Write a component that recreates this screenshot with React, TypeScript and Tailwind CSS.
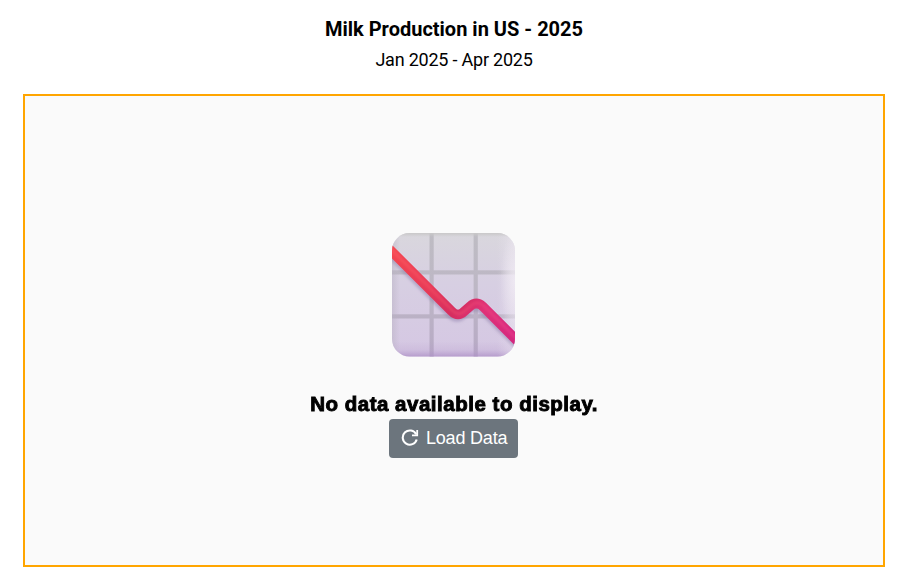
function ChartDecreasing() {
  const line = "M384 243.7L451.5 311.2Q458 317.8 464.5 311.2L470 306.4Q476.3 300.8 482.8 306.4L524 347.6";
  return (
    <svg width="124" height="124" viewBox="392 233 124 124" className="block">
      <defs>
        <linearGradient id="base" x1="0" y1="0" x2="0" y2="1">
          <stop offset="0" stopColor="#d9d7dd" />
          <stop offset="0.4" stopColor="#d7cfe2" />
          <stop offset="1" stopColor="#d5c7e3" />
        </linearGradient>
        <linearGradient id="bottom" x1="0" y1="0" x2="0" y2="1">
          <stop offset="0" stopColor="#b296c9" stopOpacity="0" />
          <stop offset="0.55" stopColor="#b296c9" stopOpacity="0.25" />
          <stop offset="1" stopColor="#ac8fc5" />
        </linearGradient>
        <linearGradient id="right">
          <stop offset="0" stopColor="#eee8f2" stopOpacity="0" />
          <stop offset="1" stopColor="#eee8f2" stopOpacity="0.85" />
        </linearGradient>
        <linearGradient id="left">
          <stop offset="0" stopColor="#b9b2c3" stopOpacity="0.5" />
          <stop offset="1" stopColor="#b9b2c3" stopOpacity="0" />
        </linearGradient>
        <linearGradient id="top" x1="0" y1="0" x2="0" y2="1">
          <stop offset="0" stopColor="#c9c8c9" />
          <stop offset="1" stopColor="#c9c8c9" stopOpacity="0" />
        </linearGradient>
        <linearGradient id="grid" gradientUnits="userSpaceOnUse" x1="0" y1="233" x2="0" y2="357">
          <stop offset="0" stopColor="#bebcc3" />
          <stop offset="0.45" stopColor="#bdb7c5" />
          <stop offset="1" stopColor="#b7a9c5" />
        </linearGradient>
        <linearGradient id="trend" gradientUnits="userSpaceOnUse" x1="392" y1="250" x2="515" y2="340">
          <stop offset="0" stopColor="#f54650" />
          <stop offset="0.35" stopColor="#e73a57" />
          <stop offset="0.57" stopColor="#d52e60" />
          <stop offset="0.72" stopColor="#e03278" />
          <stop offset="1" stopColor="#d5267e" />
        </linearGradient>
        <linearGradient id="highlight" gradientUnits="userSpaceOnUse" x1="392" y1="250" x2="515" y2="340">
          <stop offset="0" stopColor="#ff656b" />
          <stop offset="0.5" stopColor="#f4506a" />
          <stop offset="1" stopColor="#f0489a" />
        </linearGradient>
        <radialGradient id="glow">
          <stop offset="0" stopColor="#f4eff6" />
          <stop offset="1" stopColor="#f4eff6" stopOpacity="0" />
        </radialGradient>
        <clipPath id="tile">
          <rect x="392" y="233" width="123" height="123.5" rx="17.5" />
        </clipPath>
        <filter id="soft" x="-20%" y="-20%" width="140%" height="140%">
          <feGaussianBlur stdDeviation="1.7" />
        </filter>
        <filter id="shine" x="-20%" y="-20%" width="140%" height="140%">
          <feGaussianBlur stdDeviation="0.9" />
        </filter>
      </defs>
      <g clipPath="url(#tile)">
        <rect x="392" y="233" width="124" height="124" fill="url(#base)" />
        <g fill="url(#grid)">
          <rect x="429.5" y="233" width="4.2" height="124" />
          <rect x="473.6" y="233" width="4.2" height="124" />
          <rect x="392" y="270.3" width="124" height="4.2" />
          <rect x="392" y="314.3" width="124" height="4.2" />
        </g>
        <rect x="392" y="341" width="124" height="16" fill="url(#bottom)" opacity="0.8" />
        <rect x="497" y="233" width="19" height="124" fill="url(#right)" opacity="0.6" />
        <ellipse cx="514" cy="282" rx="14" ry="50" fill="url(#glow)" opacity="0.65" />
        <rect x="392" y="233" width="8" height="124" fill="url(#left)" />
        <rect x="392" y="233" width="124" height="4" fill="url(#top)" />
        <path d={line} transform="translate(-1 3)" fill="none" stroke="#8e7da9" strokeOpacity="0.5" strokeWidth="8.5" filter="url(#soft)" />
        <path d={line} fill="none" stroke="url(#trend)" strokeWidth="9.6" strokeLinejoin="round" />
        <path d={line} transform="translate(0.8 -0.8)" fill="none" stroke="url(#highlight)" strokeOpacity="0.4" strokeWidth="3" filter="url(#shine)" />
      </g>
    </svg>
  );
}

function ReloadIcon() {
  return (
    <svg width="18" height="18" viewBox="0 0 18 18" fill="none" className="block">
      <path d="M15.2 5.4A7.1 7.1 0 1 0 15.7 10.4" stroke="white" strokeWidth="2.1" />
      <path d="M11 6.3H16.2V1" stroke="white" strokeWidth="1.8" />
    </svg>
  );
}

export default function App() {
  return (
    <main className="flex h-[583px] w-[905px] flex-col bg-white pr-5 pb-4 pl-[23px] text-black">
      <header className="flex h-[94px] flex-col items-center pt-[14px] font-['Roboto',sans-serif]">
        <h1 className="text-[20px] leading-[30px] font-bold">Milk Production in US - 2025</h1>
        <p className="text-[18px] leading-8 tracking-[-0.22px]">Jan 2025 - Apr 2025</p>
      </header>
      <section className="flex h-[473px] w-[862px] flex-col items-center border-2 border-[#ffa500] bg-[#fafafa] pt-[137px] font-['Liberation_Sans',sans-serif]">
        <ChartDecreasing />
        <p className="mt-[33px] h-[29px] scale-x-[1.05] text-[19.5px] leading-[29px] font-bold tracking-[0.5px] whitespace-nowrap [-webkit-text-stroke:0.9px_black]">No data available to display.</p>
        <button className="mr-px flex h-[39px] w-[129px] items-center rounded-[4px] bg-[#6c757d] pl-3 text-[18px] text-white">
          <span className="-mt-[2px]"><ReloadIcon /></span>
          <span className="ml-[7px] tracking-[-0.2px] whitespace-nowrap">Load Data</span>
        </button>
      </section>
    </main>
  );
}
